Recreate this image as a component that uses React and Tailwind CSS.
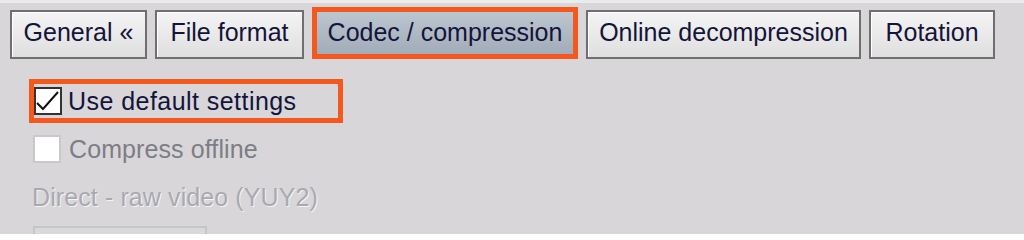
const tabs = [
  { label: "General «", w: "w-[137px]" },
  { label: "File format", w: "w-[149px]" },
  { label: "Codec / compression", w: "w-[266px]", active: true },
  { label: "Online decompression", w: "w-[275px]" },
  { label: "Rotation", w: "w-[126px]" },
];

function Tab({ label, w, active }) {
  if (active) {
    return (
      <div className={`${w} h-[52px] border-[5px] border-[#f4581c] p-0`}>
        <div className="flex h-full items-center justify-center bg-gradient-to-b from-[#bcc6d0] to-[#a2acb8] pb-[3px] text-[#14143a]">
          {label}
        </div>
      </div>
    );
  }
  return (
    <div
      className={`${w} flex h-[49px] items-center justify-center border-2 border-[#6f6f6f] bg-gradient-to-b from-[#f4f4f4] to-[#dfdfdf] pb-[5px] text-[#14143a] shadow-[inset_1px_1px_0_#ffffff]`}
    >
      {label}
    </div>
  );
}

export default function App() {
  return (
    <div className="h-[234px] w-[1024px] overflow-hidden border-t-[3px] border-[#ebebeb] bg-[#d8d6d9] font-['Liberation_Sans',Arial,sans-serif] text-[25px] leading-[30px]">
      {/* tab strip */}
      <div className="flex h-[56px] items-end gap-[8px] pl-[10px] pt-[4px]">
        {tabs.map((t) => (
          <Tab key={t.label} {...t} />
        ))}
      </div>

      <div className="flex flex-col items-start pl-[29px]">
        {/* focused checkbox */}
        <div className="mt-[20px] flex h-[44px] w-[314px] items-center border-[5px] border-[#f4581c]">
          <div className="flex h-[28px] w-[28px] items-center justify-center border-2 border-[#333333] bg-white">
            <svg width="24" height="24" viewBox="0 0 24 24" fill="none">
              <path d="M1 14 L7 20 L22 3" stroke="#111111" strokeWidth="2" />
            </svg>
          </div>
          <span className="ml-[6px] tracking-[0.45px] text-[#14143a]">Use default settings</span>
        </div>

        {/* disabled checkbox */}
        <div className="mt-[12px] flex h-[28px] items-center pl-[4px]">
          <div className="h-[28px] w-[28px] border-2 border-[#c9c9c9] bg-white" />
          <span className="ml-[8px] tracking-[0.1px] text-[#7e7d86]">Compress offline</span>
        </div>

        <div className="ml-[3px] mt-[19px] tracking-[0.1px] text-[#aaa9b1] [text-shadow:1px_1px_0_#f4f4f4]">
          Direct - raw video (YUY2)
        </div>

        <div className="ml-[4px] mt-[14px] h-[30px] w-[174px] border-2 border-[#c6c5c8] bg-[#d9d8da]" />
      </div>
    </div>
  );
}
